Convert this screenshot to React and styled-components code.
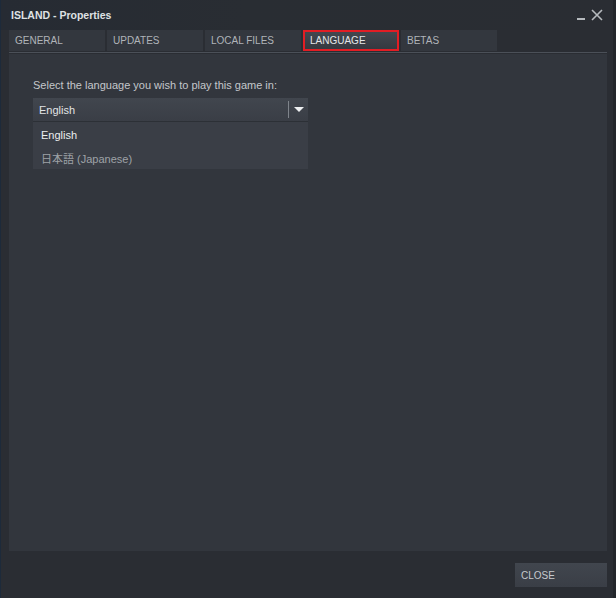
import React from 'react';
import styled, { createGlobalStyle } from 'styled-components';

const Global = createGlobalStyle`
  html, body {
    margin: 0;
    padding: 0;
    background: #2a2d33;
  }
  * { box-sizing: border-box; }
`

const Window = styled.div`
  width: 616px;
  height: 598px;
  background: #2a2d33;
  border-left: 1px solid #1d2a3a;
  border-right: 3px solid #23262b;
  display: flex;
  flex-direction: column;
  font-family: Arial, "Liberation Sans", "Noto Sans CJK JP", sans-serif;
`

const TitleBar = styled.div`
  height: 30px;
  display: flex;
  align-items: center;
  padding: 0 0 0 10px;
  background: linear-gradient(90deg, #262b33 0%, #292d33 40%, #2a2d33 100%);
  position: relative;
`

const Title = styled.div`
  color: #dfe1e3;
  font-size: 10.5px;
  font-weight: bold;
  margin-top: -1px;
`

const Controls = styled.div`
  position: absolute;
  right: 10px;
  top: 7px;
  display: flex;
  align-items: flex-end;
  gap: 5px;
`

const Tabs = styled.div`
  display: flex;
  gap: 2px;
  margin: 0 6px 0 8px;
  padding-bottom: 1px;
  border-bottom: 1px solid #4b5058;
`

const Tab = styled.div`
  width: 96px;
  height: 21px;
  display: flex;
  align-items: center;
  padding-left: ${p => (p.$active ? '5px' : '6px')};
  padding-bottom: 1px;
  font-size: 10px;
  color: ${p => (p.$active ? '#e4e6e8' : '#b0b4b9')};
  background: ${p => (p.$active ? 'linear-gradient(180deg, #42474f 0%, #353940 100%)' : '#33373e')};
  border: ${p => (p.$active ? '2px solid #e21d24' : 'none')};
`

const Panel = styled.div`
  flex: 1;
  margin: 1px 6px 0 8px;
  background: #32363d;
  padding: 25px 24px;
  max-height: 499px;
`

const Label = styled.div`
  color: #c4c7cb;
  font-size: 11px;
  margin-bottom: 7px;
`

const Select = styled.div`
  width: 275px;
  height: 24px;
  background: linear-gradient(180deg, #41464e 0%, #3a3e46 100%);
  display: flex;
  align-items: center;
  padding-left: 6px;
  color: #e2e4e6;
  font-size: 11px;
  border-bottom: 1px solid #2c3036;
`

const SelectText = styled.div`
  flex: 1;
`

const Divider = styled.div`
  width: 1px;
  height: 17px;
  background: #7f848b;
`

const Arrow = styled.div`
  width: 19px;
  display: flex;
  justify-content: center;
  align-items: center;
`

const Menu = styled.div`
  width: 275px;
  background: #3a3e46;
  padding: 1px 0 0 8px;
`

const Item = styled.div`
  height: 23px;
  display: flex;
  align-items: center;
  font-size: 11px;
  color: ${p => (p.$dim ? '#9ea2a7' : '#eceef0')};
`

const Footer = styled.div`
  height: 47px;
  display: flex;
  justify-content: flex-end;
  align-items: center;
  padding-right: 6px;
`

const Button = styled.div`
  width: 92px;
  height: 24px;
  background: linear-gradient(180deg, #41464e 0%, #3a3e46 100%);
  color: #c6c9cd;
  font-size: 10px;
  display: flex;
  align-items: center;
  padding: 1px 0 0 6px;
`

export default function App() {
  return (
    <>
      <Global />
      <Window>
        <TitleBar>
          <Title>ISLAND - Properties</Title>
          <Controls>
            <svg width="10" height="14" viewBox="0 0 10 14">
              <rect x="1" y="11" width="8" height="2" fill="#b6babe" />
            </svg>
            <svg width="12" height="12" viewBox="0 0 12 12">
              <path d="M1 1 L11 11 M11 1 L1 11" stroke="#b6babe" strokeWidth="1.6" />
            </svg>
          </Controls>
        </TitleBar>
        <Tabs>
          <Tab>GENERAL</Tab>
          <Tab>UPDATES</Tab>
          <Tab>LOCAL FILES</Tab>
          <Tab $active>LANGUAGE</Tab>
          <Tab>BETAS</Tab>
        </Tabs>
        <Panel>
          <Label>Select the language you wish to play this game in:</Label>
          <Select>
            <SelectText>English</SelectText>
            <Divider />
            <Arrow>
              <svg width="10" height="6" viewBox="0 0 10 6">
                <path d="M0 0 L10 0 L5 5 Z" fill="#eef0f2" />
              </svg>
            </Arrow>
          </Select>
          <Menu>
            <Item>English</Item>
            <Item $dim>日本語 (Japanese)</Item>
          </Menu>
        </Panel>
        <Footer>
          <Button>CLOSE</Button>
        </Footer>
      </Window>
    </>
  );
}
